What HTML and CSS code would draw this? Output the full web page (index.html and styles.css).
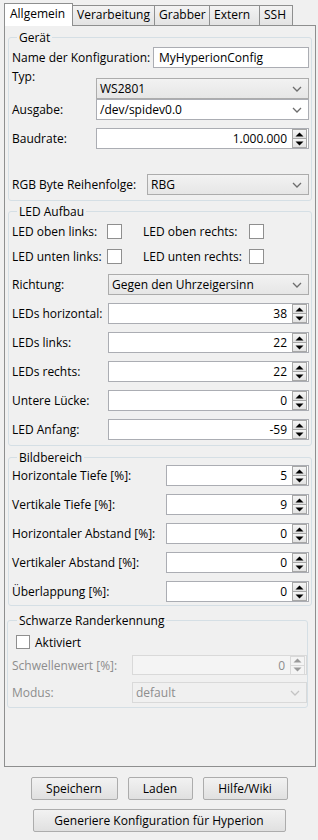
FILE: index.html
```html
<!DOCTYPE html>
<html lang="de">
<head>
<meta charset="utf-8">
<link rel="stylesheet" href="styles.css">
</head>
<body>
<div class="window">
  <div class="tabs">
    <div class="tab active">Allgemein</div>
    <div class="tab t-verarb">Verarbeitung</div>
    <div class="tab t-grab">Grabber</div>
    <div class="tab t-ext">Extern</div>
    <div class="tab t-ssh">SSH</div>
  </div>
  <div class="panel">
    <div class="group g-geraet">
      <div class="gtitle">Gerät</div>
      <div class="row r-name"><span class="lbl w141">Name der Konfiguration:</span><div class="field text grow">MyHyperionConfig</div></div>
      <div class="row r-typ"><span class="lbl w84 top">Typ:</span><div class="combo grow"><span>WS2801</span><svg class="chev" viewBox="0 0 10 6"><path d="M1 1l4 4 4-4" fill="none" stroke="#6d6d6d" stroke-width="1.3"/></svg></div></div>
      <div class="row r-ausg"><span class="lbl w84">Ausgabe:</span><div class="combo edit grow"><span>/dev/spidev0.0</span><svg class="chev" viewBox="0 0 10 6"><path d="M1 1l4 4 4-4" fill="none" stroke="#6d6d6d" stroke-width="1.3"/></svg></div></div>
      <div class="row r-baud"><span class="lbl w84">Baudrate:</span><div class="spin grow"><span class="val">1.000.000</span><div class="sbtns"><div class="sb"><svg viewBox="0 0 9 5"><path d="M0.5 4.5L4.5 0.5 8.5 4.5z" fill="#000"/></svg></div><div class="sb"><svg viewBox="0 0 9 5"><path d="M0.5 0.5L4.5 4.5 8.5 0.5z" fill="#000"/></svg></div></div></div></div>
      <div class="row r-rgb"><span class="lbl w135">RGB Byte Reihenfolge:</span><div class="combo grow"><span>RBG</span><svg class="chev" viewBox="0 0 10 6"><path d="M1 1l4 4 4-4" fill="none" stroke="#6d6d6d" stroke-width="1.3"/></svg></div></div>
    </div>

    <div class="group g-led">
      <div class="gtitle">LED Aufbau</div>
      <div class="row cbrow first"><span class="lbl w95">LED oben links:</span><span class="cb"></span><span class="lbl w106 l2">LED oben rechts:</span><span class="cb"></span></div>
      <div class="row cbrow"><span class="lbl w95">LED unten links:</span><span class="cb"></span><span class="lbl w106 l2">LED unten rechts:</span><span class="cb"></span></div>
      <div class="row r-richt"><span class="lbl w96">Richtung:</span><div class="combo grow"><span>Gegen den Uhrzeigersinn</span><svg class="chev" viewBox="0 0 10 6"><path d="M1 1l4 4 4-4" fill="none" stroke="#6d6d6d" stroke-width="1.3"/></svg></div></div>
      <div class="row srow"><span class="lbl w96">LEDs horizontal:</span><div class="spin grow"><span class="val">38</span><div class="sbtns"><div class="sb"><svg viewBox="0 0 9 5"><path d="M0.5 4.5L4.5 0.5 8.5 4.5z" fill="#000"/></svg></div><div class="sb"><svg viewBox="0 0 9 5"><path d="M0.5 0.5L4.5 4.5 8.5 0.5z" fill="#000"/></svg></div></div></div></div>
      <div class="row srow"><span class="lbl w96">LEDs links:</span><div class="spin grow"><span class="val">22</span><div class="sbtns"><div class="sb"><svg viewBox="0 0 9 5"><path d="M0.5 4.5L4.5 0.5 8.5 4.5z" fill="#000"/></svg></div><div class="sb"><svg viewBox="0 0 9 5"><path d="M0.5 0.5L4.5 4.5 8.5 0.5z" fill="#000"/></svg></div></div></div></div>
      <div class="row srow"><span class="lbl w96">LEDs rechts:</span><div class="spin grow"><span class="val">22</span><div class="sbtns"><div class="sb"><svg viewBox="0 0 9 5"><path d="M0.5 4.5L4.5 0.5 8.5 4.5z" fill="#000"/></svg></div><div class="sb"><svg viewBox="0 0 9 5"><path d="M0.5 0.5L4.5 4.5 8.5 0.5z" fill="#000"/></svg></div></div></div></div>
      <div class="row srow"><span class="lbl w96">Untere Lücke:</span><div class="spin grow"><span class="val">0</span><div class="sbtns"><div class="sb"><svg viewBox="0 0 9 5"><path d="M0.5 4.5L4.5 0.5 8.5 4.5z" fill="#000"/></svg></div><div class="sb"><svg viewBox="0 0 9 5"><path d="M0.5 0.5L4.5 4.5 8.5 0.5z" fill="#000"/></svg></div></div></div></div>
      <div class="row srow"><span class="lbl w96">LED Anfang:</span><div class="spin grow"><span class="val">-59</span><div class="sbtns"><div class="sb"><svg viewBox="0 0 9 5"><path d="M0.5 4.5L4.5 0.5 8.5 4.5z" fill="#000"/></svg></div><div class="sb"><svg viewBox="0 0 9 5"><path d="M0.5 0.5L4.5 4.5 8.5 0.5z" fill="#000"/></svg></div></div></div></div>
    </div>

    <div class="group g-bild">
      <div class="gtitle">Bildbereich</div>
      <div class="row srow first"><span class="lbl w154">Horizontale Tiefe [%]:</span><div class="spin grow"><span class="val">5</span><div class="sbtns"><div class="sb"><svg viewBox="0 0 9 5"><path d="M0.5 4.5L4.5 0.5 8.5 4.5z" fill="#000"/></svg></div><div class="sb"><svg viewBox="0 0 9 5"><path d="M0.5 0.5L4.5 4.5 8.5 0.5z" fill="#000"/></svg></div></div></div></div>
      <div class="row srow"><span class="lbl w154">Vertikale Tiefe [%]:</span><div class="spin grow"><span class="val">9</span><div class="sbtns"><div class="sb"><svg viewBox="0 0 9 5"><path d="M0.5 4.5L4.5 0.5 8.5 4.5z" fill="#000"/></svg></div><div class="sb"><svg viewBox="0 0 9 5"><path d="M0.5 0.5L4.5 4.5 8.5 0.5z" fill="#000"/></svg></div></div></div></div>
      <div class="row srow"><span class="lbl w154">Horizontaler Abstand [%]:</span><div class="spin grow"><span class="val">0</span><div class="sbtns"><div class="sb"><svg viewBox="0 0 9 5"><path d="M0.5 4.5L4.5 0.5 8.5 4.5z" fill="#000"/></svg></div><div class="sb"><svg viewBox="0 0 9 5"><path d="M0.5 0.5L4.5 4.5 8.5 0.5z" fill="#000"/></svg></div></div></div></div>
      <div class="row srow"><span class="lbl w154">Vertikaler Abstand [%]:</span><div class="spin grow"><span class="val">0</span><div class="sbtns"><div class="sb"><svg viewBox="0 0 9 5"><path d="M0.5 4.5L4.5 0.5 8.5 4.5z" fill="#000"/></svg></div><div class="sb"><svg viewBox="0 0 9 5"><path d="M0.5 0.5L4.5 4.5 8.5 0.5z" fill="#000"/></svg></div></div></div></div>
      <div class="row srow"><span class="lbl w154">Überlappung [%]:</span><div class="spin grow"><span class="val">0</span><div class="sbtns"><div class="sb"><svg viewBox="0 0 9 5"><path d="M0.5 4.5L4.5 0.5 8.5 4.5z" fill="#000"/></svg></div><div class="sb"><svg viewBox="0 0 9 5"><path d="M0.5 0.5L4.5 4.5 8.5 0.5z" fill="#000"/></svg></div></div></div></div>
    </div>

    <div class="group g-schwarz">
      <div class="gtitle">Schwarze Randerkennung</div>
      <div class="row r-akt"><span class="cb"></span><span class="akt">Aktiviert</span></div>
      <div class="row r-schw"><span class="lbl w120 dis">Schwellenwert [%]:</span><div class="spin grow disabled"><span class="val">0</span><div class="sbtns"><div class="sb"><svg viewBox="0 0 9 5"><path d="M0.5 4.5L4.5 0.5 8.5 4.5z" fill="#9a9a9a"/></svg></div><div class="sb"><svg viewBox="0 0 9 5"><path d="M0.5 0.5L4.5 4.5 8.5 0.5z" fill="#9a9a9a"/></svg></div></div></div></div>
      <div class="row r-modus"><span class="lbl w120 dis">Modus:</span><div class="combo grow disabled"><span>default</span><svg class="chev" viewBox="0 0 10 6"><path d="M1 1l4 4 4-4" fill="none" stroke="#c4c4c4" stroke-width="1.3"/></svg></div></div>
    </div>
  </div>

  <div class="buttons">
    <div class="btnrow">
      <div class="btn b-speich">Speichern</div>
      <div class="btn b-laden">Laden</div>
      <div class="btn b-hilfe">Hilfe/Wiki</div>
    </div>
    <div class="btnrow">
      <div class="btn b-gen">Generiere Konfiguration für Hyperion</div>
    </div>
  </div>
</div>
</body>
</html>
```

FILE: styles.css
```css
* { box-sizing: border-box; }
html, body {
  margin: 0;
  padding: 0;
  background: #f0f0f0;
}
body {
  width: 318px;
  height: 840px;
  font-family: "Open Sans", "Noto Sans", sans-serif;
  font-size: 12px;
  color: #000;
  overflow: hidden;
}
.window { padding-top: 3px; }

/* Tabs */
.tabs {
  display: flex;
  align-items: flex-end;
  margin-left: 4px;
  height: 22px;
  position: relative;
  z-index: 2;
}
.tab {
  height: 20px;
  border: 1px solid #8e8f8f;
  border-bottom: none;
  border-left: none;
  background: linear-gradient(#f3f3f3, #e3e3e3);
  line-height: 18px;
  padding: 0 4px;
  white-space: nowrap;
}
.tab.active {
  height: 22px;
  border-left: 1px solid #8e8f8f;
  background: #ffffff;
  padding: 1px 5px 0 5px;
  width: 69px;
  margin-bottom: -1px;
  height: 23px;
}
.t-verarb { width: 82px; }
.t-grab { width: 55px; }
.t-ext { width: 50px; }
.t-ssh { width: 33px; }

/* Panel */
.panel {
  margin-left: 4px;
  width: 312px;
  height: 742px;
  border: 1px solid #8e8f8f;
  background: #f0f0f0;
  padding-top: 11px;
}

.group {
  border: 1px solid #d5dfe5;
  border-radius: 3px;
}
.gtitle {
  width: fit-content;
  margin: -8px 0 0 5px;
  padding: 0 2px;
  line-height: 15px;
  background: #f0f0f0;
}
.g-geraet { margin: 0 3px; padding: 0 2px 5px 3px; }
.g-led { margin: 10px 3px 0; padding: 0 2px 5px 3px; }
.g-bild { margin: 11px 3px 0; padding: 0 2px 3px 3px; }
.g-schwarz { margin: 14px 7px 0 2px; padding: 0 0 4px 4px; }

.row {
  display: flex;
  align-items: center;
  height: 21px;
}
.grow { flex: 1; min-width: 0; }
.lbl { flex: none; white-space: nowrap; }
.lbl.top { align-self: flex-start; margin-top: -10px; }
.w84 { width: 84px; }
.w95 { width: 95px; }
.w96 { width: 96px; }
.w106 { width: 106px; }
.w120 { width: 120px; }
.w135 { width: 135px; }
.w141 { width: 141px; }
.w154 { width: 154px; }
.dis { color: #8d8d8d; }

.r-name { margin-top: 2px; }
.r-typ { margin-top: 10px; }
.r-ausg { margin-top: 0; }
.r-baud { margin-top: 8px; }
.r-rgb { margin-top: 25px; }

.cbrow { height: 15px; margin-top: 10px; }
.cbrow.first { margin-top: 5px; }
.l2 { margin-left: 21px; }
.r-richt { margin-top: 10px; }
.srow { margin-top: 8px; }
.srow.first { margin-top: 0; }

.r-akt { height: 14px; margin-top: 7px; padding-left: 4px; }
.akt { margin-left: 5px; }
.r-schw { height: 20px; margin-top: 6px; }
.r-modus { margin-top: 7px; }

/* Controls */
.field, .combo, .spin {
  height: 100%;
  border: 1px solid #acacac;
  background: #fff;
  display: flex;
  align-items: center;
  white-space: nowrap;
  overflow: hidden;
}
.field.text { padding-left: 5px; border-color: #abadb3; }
.combo {
  padding-left: 3px;
  background: linear-gradient(#f2f2f2, #e6e6e6);
  justify-content: space-between;
}
.combo.edit { background: #fff; border-color: #abadb3; }
.chev { width: 10px; height: 6px; margin-right: 6px; flex: none; }
.combo.disabled {
  background: #f0f0f0;
  border-color: #d9d9d9;
  color: #8d8d8d;
}

.spin {
  justify-content: flex-end;
  border-color: #abadb3;
  padding-right: 1px;
}
.spin .val { margin-right: 5px; }
.spin.disabled { background: #f4f4f4; border-color: #d9d9d9; color: #8d8d8d; }
.sbtns {
  display: flex;
  flex-direction: column;
  width: 15px;
  height: 19px;
  flex: none;
}
.sb {
  flex: 1;
  border: 1px solid #a7a7a7;
  background: linear-gradient(#f5f5f5, #e2e2e2);
  display: flex;
  align-items: center;
  justify-content: center;
}
.sb + .sb { border-top: none; }
.sb svg { width: 9px; height: 5px; display: block; }
.spin.disabled .sb { border-color: #d9d9d9; background: #f4f4f4; }

.cb {
  width: 15px;
  height: 15px;
  flex: none;
  border: 1px solid #8f8f8f;
  background: #fff;
}
.r-akt .cb { width: 14px; height: 14px; }

/* Buttons */
.buttons { padding-top: 10px; }
.btnrow {
  display: flex;
  justify-content: center;
  gap: 10px;
  margin-bottom: 9px;
}
.btn {
  height: 23px;
  border: 1px solid #acacac;
  border-radius: 2px;
  background: linear-gradient(#f2f2f2, #e0e0e0);
  text-align: center;
  line-height: 21px;
  white-space: nowrap;
}
.b-speich { width: 87px; }
.b-laden { width: 65px; }
.b-hilfe { width: 85px; }
.b-gen { width: 253px; }
```
